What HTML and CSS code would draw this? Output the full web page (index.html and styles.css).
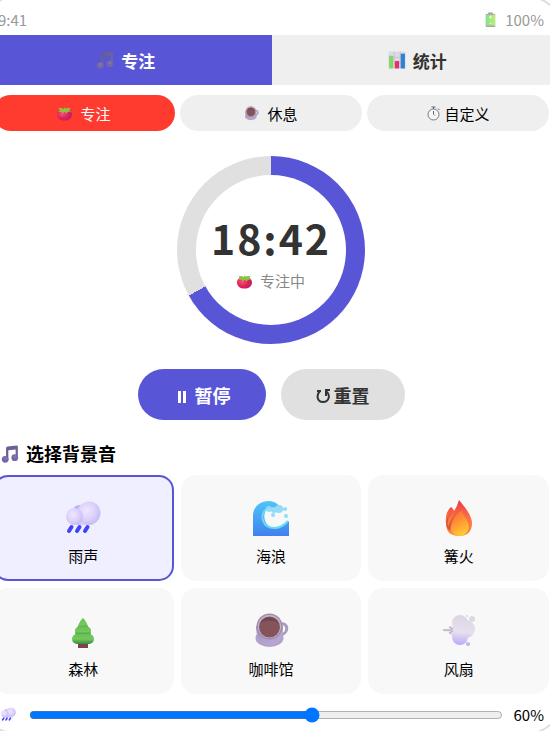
FILE: index.html
```html
<!DOCTYPE html>
<html lang="zh-CN">
<head>
	<meta charset="utf-8">
	<meta name="viewport" content="width=device-width, initial-scale=1.0">
	<title>专注</title>
	<link rel="stylesheet" href="styles.css">
</head>
<body>
	<!-- icons used more than once -->
	<svg class="defs" width="0" height="0" aria-hidden="true">
		<defs>
			<linearGradient id="noteFill" x1="0" y1="0" x2="1" y2="1">
				<stop offset="0" stop-color="#665a90"/>
				<stop offset="1" stop-color="#7668a8"/>
			</linearGradient>
			<radialGradient id="tomatoFill" cx="0.35" cy="0.4" r="0.7">
				<stop offset="0" stop-color="#ff4b83"/>
				<stop offset="0.6" stop-color="#dd2055"/>
				<stop offset="1" stop-color="#b52268"/>
			</radialGradient>
			<radialGradient id="cloudFill" cx="0.4" cy="0.4" r="0.65">
				<stop offset="0" stop-color="#eee8ff"/>
				<stop offset="0.6" stop-color="#dcd0fa"/>
				<stop offset="1" stop-color="#c5b8f4"/>
			</radialGradient>
			<linearGradient id="cupFill" x1="0" y1="0" x2="1" y2="1">
				<stop offset="0" stop-color="#a792bd"/>
				<stop offset="1" stop-color="#b9acd8"/>
			</linearGradient>
			<linearGradient id="waveFill" x1="0" y1="0" x2="0" y2="1">
				<stop offset="0" stop-color="#4ec4fa"/>
				<stop offset="1" stop-color="#4280ee"/>
			</linearGradient>
			<linearGradient id="fireOuter" x1="0" y1="0" x2="0" y2="1">
				<stop offset="0" stop-color="#ec3845"/>
				<stop offset="0.5" stop-color="#fb7243"/>
				<stop offset="1" stop-color="#fa8b3d"/>
			</linearGradient>
			<linearGradient id="fireInner" x1="0.3" y1="0" x2="0.7" y2="1">
				<stop offset="0" stop-color="#fb6a3b"/>
				<stop offset="0.5" stop-color="#ff9a35"/>
				<stop offset="1" stop-color="#ffd22f"/>
			</linearGradient>
			<linearGradient id="treeFill" x1="0" y1="0" x2="0" y2="1">
				<stop offset="0" stop-color="#5fc45b"/>
				<stop offset="0.5" stop-color="#78c759"/>
				<stop offset="1" stop-color="#3c8748"/>
			</linearGradient>
			<linearGradient id="windFill" gradientUnits="userSpaceOnUse" x1="20" y1="2" x2="17" y2="33">
				<stop offset="0" stop-color="#dcd6e0"/>
				<stop offset="0.55" stop-color="#e6dff0"/>
				<stop offset="1" stop-color="#b7a3f6"/>
			</linearGradient>
			<linearGradient id="batteryFill">
				<stop offset="0" stop-color="#81e489"/>
				<stop offset="1" stop-color="#c3ec72"/>
			</linearGradient>
		</defs>
		<symbol id="note" viewBox="0 0 32 32">
			<path fill="url(#noteFill)" d="M9 6Q9 3 12 2.600L28 1Q30 1 30 3V23H26V8L13 9.500V26H9Z"/>
			<circle cx="7.500" cy="25.500" r="6" fill="#7567a6"/>
			<circle cx="24.500" cy="22.500" r="6" fill="#7567a6"/>
			<circle cx="8" cy="24" r="2.500" fill="#8377b5"/>
			<circle cx="25" cy="21" r="2.500" fill="#8377b5"/>
		</symbol>
		<symbol id="tomato" viewBox="0 0 32 32">
			<path fill="url(#tomatoFill)" d="M16 8C24 4 32 10 32 18C32 26 25 31 16 31S0 26 0 18C0 10 8 4 16 8Z"/>
			<path fill="#8ac43f" d="M15 4L18 3L18 6Q23 3 29 5L26 9L30 12L23 12L21 16L16 12L12 16L10 12L3 13L6 9L3 5Q10 3 15 7Z"/>
		</symbol>
		<symbol id="rain" viewBox="0 0 36 34">
			<circle cx="14" cy="10" r="6" fill="#b9b5f2"/>
			<path fill="#d6cbf9" d="M9 13H28V24H9Z"/>
			<circle cx="24" cy="12" r="11.500" fill="url(#cloudFill)"/>
			<circle cx="9.500" cy="15.500" r="8.500" fill="url(#cloudFill)"/>
			<path stroke="#3d46fc" stroke-width="4" stroke-linecap="round" d="M6.500 26L4 30M14.500 26L12 30M22.500 26L20 30"/>
		</symbol>
		<symbol id="coffee" viewBox="0 0 36 36">
			<path fill="none" stroke="#aa9cc0" stroke-width="3" d="M27 11C36 9 36 21 27 22"/>
			<ellipse cx="16.500" cy="25" rx="14" ry="9" fill="#b2a1cc"/>
			<path fill="url(#cupFill)" d="M3 13H30Q31 32 17 32T3 13Z"/>
			<circle cx="16.500" cy="13.500" r="13" fill="#9e8da8"/>
			<circle cx="16.500" cy="13.500" r="11.500" fill="#c5b7d3"/>
			<circle cx="16.500" cy="14" r="10.500" fill="#85545a"/>
			<path fill="#6d464e" d="M7 10Q16 -1 26 10Q16 5 7 10Z"/>
		</symbol>
	</svg>

	<div class="phone">
		<div class="status-bar">
			<span>9:41</span>
			<span class="battery">
				<svg class="icon-sm" viewBox="0 0 32 32" aria-hidden="true">
					<path fill="#a99eb2" d="M11 1H21V5H11Z"/>
					<path fill="#aaa3b0" d="M6 4H26V32H6Z"/>
					<path fill="url(#batteryFill)" d="M6 6H26V29H6Z"/>
					<path stroke="#effff0" stroke-width="2" d="M16 8V14M13 11H19M14 24H18"/>
				</svg>
				100%
			</span>
		</div>

		<div class="tabs">
			<button type="button" class="tab active">
				<svg class="icon-md" aria-hidden="true"><use href="#note"/></svg>
				专注
			</button>
			<button type="button" class="tab">
				<svg class="icon-md" viewBox="0 0 34 34" aria-hidden="true">
					<path fill="#dfd9e5" d="M1 1H33V33H1Z"/>
					<path stroke="#bdb4c7" d="M1 12H33M1 23H33M12 1V33M23 1V33"/>
					<path fill="#84d765" d="M2 9H10V33H2Z"/>
					<path fill="#e6306b" d="M13 19H21V33H13Z"/>
					<path fill="#2c83d4" d="M24 5H32V33H24Z"/>
				</svg>
				统计
			</button>
		</div>

		<div class="content">
			<div class="modes">
				<button type="button" class="mode active">
					<svg class="icon-sm" aria-hidden="true"><use href="#tomato"/></svg>
					专注
				</button>
				<button type="button" class="mode">
					<svg class="icon-sm" aria-hidden="true"><use href="#coffee"/></svg>
					休息
				</button>
				<button type="button" class="mode narrow">
					<svg class="icon-sm" viewBox="0 0 30 30" aria-hidden="true">
						<circle cx="15" cy="17" r="11" fill="#f6f6f6" stroke="#777" stroke-width="2"/>
						<path fill="none" stroke="#666" stroke-width="2" d="M11 2H19M15 2V6M24 5L27 8M15 17V10"/>
						<path stroke="#b8a58a" stroke-width="2" d="M15 17L19 19"/>
					</svg>
					自定义
				</button>
			</div>

			<div class="timer">
				<div class="timer-inner">
					<div class="time">18:42</div>
					<div class="state">
						<svg class="icon-sm" aria-hidden="true"><use href="#tomato"/></svg>
						专注中
					</div>
				</div>
			</div>

			<div class="controls">
				<button type="button" class="control primary">
					<svg class="icon-md" viewBox="0 0 18 18" aria-hidden="true">
						<path fill="#fff" d="M5 5H8V17H5ZM10 5H13V17H10Z"/>
					</svg>
					暂停
				</button>
				<button type="button" class="control reset">
					<svg class="icon-reset" viewBox="0 0 15 18" aria-hidden="true">
						<path fill="none" stroke="#333" stroke-width="2" d="M4 5C0 9 1 16 7 16C13 16 15 9 10 5"/>
						<path fill="none" stroke="#333" stroke-width="2" d="M14 4H10V10M1 5H5"/>
					</svg>
					重置
				</button>
			</div>

			<h2 class="title">
				<svg class="icon-md" aria-hidden="true"><use href="#note"/></svg>
				选择背景音
			</h2>

			<div class="sounds">
				<button type="button" class="sound active">
					<svg class="icon-lg" aria-hidden="true"><use href="#rain"/></svg>
					雨声
				</button>
				<button type="button" class="sound">
					<svg class="icon-lg" viewBox="0 0 36 36" aria-hidden="true">
						<path fill="url(#waveFill)" d="M0 36V16C0 6 8 1 16 1Q23 1 28 8L20 14C12 20 15 29 22 28Q29 28 36 21V36Z"/>
						<path fill="#f8f8f8" d="M13 10Q20 5 29 12L35 21Q28 29 21 28C12 27 9 17 13 10Z"/>
						<path fill="none" stroke="#68d9f8" stroke-width="2" d="M13 9C6 16 10 28 21 28Q29 28 35 21"/>
						<g fill="#92dcf8">
							<circle cx="16" cy="9" r="3"/>
							<circle cx="21" cy="10" r="3"/>
							<circle cx="26" cy="9" r="4"/>
							<circle cx="32" cy="9" r="2"/>
							<circle cx="20" cy="15" r="2"/>
							<circle cx="33" cy="16" r="2"/>
						</g>
					</svg>
					海浪
				</button>
				<button type="button" class="sound">
					<svg class="icon-lg" viewBox="0 0 36 36" aria-hidden="true">
						<path fill="url(#fireOuter)" d="M18 0C22 5 31 15 31 23C31 32 26 36 18 36C9 36 5 31 5 24C4 17 6 10 10 7Q12 8 13 11Q16 7 18 0Z"/>
						<path fill="#d85338" d="M11 12Q5 19 7 27Q10 19 17 11Q10 20 9 31Q5 27 5 22Q6 16 11 12Z"/>
						<path fill="url(#fireInner)" d="M21 10C15 14 10 22 10 28C10 34 15 36 19 36C26 35 29 29 27 23C26 18 22 17 21 10Z"/>
					</svg>
					篝火
				</button>
				<button type="button" class="sound">
					<svg class="icon-lg" viewBox="0 0 36 36" aria-hidden="true">
						<path fill="#78454b" d="M13 27H23V35H13Z"/>
						<path fill="url(#treeFill)" d="M18 5C15 7 13 13 12 15C12 17 14 18 18 18S24 17 24 15C23 13 20 6 18 5Z"/>
						<rect x="10" y="14" width="16" height="9" rx="4" fill="url(#treeFill)"/>
						<rect x="7" y="21" width="22" height="10" rx="5" fill="url(#treeFill)"/>
					</svg>
					森林
				</button>
				<button type="button" class="sound">
					<svg class="icon-lg" aria-hidden="true"><use href="#coffee"/></svg>
					咖啡馆
				</button>
				<button type="button" class="sound">
					<svg class="icon-lg" viewBox="0 0 36 36" aria-hidden="true">
						<g fill="url(#windFill)">
							<circle cx="19" cy="10" r="8"/>
							<circle cx="25" cy="16" r="9"/>
							<circle cx="19" cy="24" r="8"/>
							<path d="M2 16L9 16L8 13L15 14V24L8 21L9 19L2 18Z"/>
							<circle cx="31" cy="6" r="3"/>
							<circle cx="26" cy="3" r="1"/>
							<circle cx="27" cy="31" r="2"/>
						</g>
						<path fill="none" stroke="#aaa0b2" d="M2 17H11M8 14L12 16M8 20L12 18"/>
					</svg>
					风扇
				</button>
			</div>

			<div class="volume">
				<label for="volume" aria-label="音量">
					<svg class="icon-sm" aria-hidden="true"><use href="#rain"/></svg>
				</label>
				<input type="range" id="volume" min="0" max="100" value="60">
				<output for="volume">60%</output>
			</div>
		</div>
	</div>
</body>
</html>
```
FILE: styles.css
```css
* {
	box-sizing: border-box;
}

body {
	margin: 0;
	overflow: hidden;
	background: #fff;
	color: #000;
	font-family: "Noto Sans CJK SC", sans-serif;
	font-size: 15px;
}

button {
	border: none;
	font-family: inherit;
	color: #000;
	cursor: pointer;
}

.defs {
	display: block;
}

/* the frame is a bit larger than the window, only its corners show */
.phone {
	margin: -5px -15px 0 -22px;
	border: 2px solid #ddd;
	border-radius: 40px;
}

.content {
	padding: 10px 14px 8px 13px;
}

/* icons */
.icon-sm {
	width: 15px;
	height: 15px;
}

.icon-md {
	width: 18px;
	height: 18px;
}

.icon-lg {
	width: 36px;
	height: 36px;
}

.icon-reset {
	width: 15px;
	height: 18px;
}

.icon-sm,
.icon-md,
.icon-lg,
.icon-reset {
	flex: none;
}

.status-bar {
	display: flex;
	justify-content: space-between;
	align-items: center;
	height: 38px;
	padding: 7px 19px 0 18px;
	color: #999;
}

.battery {
	display: flex;
	align-items: center;
	gap: 7px;
}

/* tabs */
.tabs {
	display: flex;
}

.tab {
	flex: 1;
	display: flex;
	justify-content: center;
	align-items: center;
	gap: 7px;
	height: 50px;
	background: #efefef;
	color: #333;
	font-size: 17px;
	font-weight: bold;
}

.tab.active {
	background: #5856d6;
	color: #fff;
}

.modes {
	display: flex;
	gap: 5px;
}

.mode {
	flex: 1;
	display: flex;
	justify-content: center;
	align-items: center;
	gap: 8px;
	height: 36px;
	border-radius: 18px;
	background: #efefef;
	font-size: 15px;
}

.mode.narrow {
	gap: 3px;
}

.mode.active {
	background: #ff3b30;
	color: #fff;
}

/* timer ring */
.timer {
	display: flex;
	justify-content: center;
	align-items: center;
	width: 188px;
	height: 188px;
	margin: 25px auto;
	border-radius: 50%;
	background: conic-gradient(#5856d6 0deg 241deg, #e0e0e0 241deg);
}

.timer-inner {
	display: flex;
	flex-direction: column;
	align-items: center;
	justify-content: center;
	width: 150px;
	height: 150px;
	border-radius: 50%;
	background: #fff;
}

.time {
	color: #333;
	font-size: 41px;
	font-weight: bold;
	line-height: 62px;
	letter-spacing: 2px;
}

.state {
	display: flex;
	align-items: center;
	gap: 8px;
	color: #888;
	line-height: 26px;
}

.controls {
	display: flex;
	justify-content: center;
	gap: 15px;
}

.control {
	display: flex;
	align-items: center;
	height: 51px;
	border-radius: 26px;
	font-size: 18px;
	font-weight: bold;
}

.primary {
	gap: 4px;
	padding: 0 35px;
	background: #5856d6;
	color: #fff;
}

.reset {
	gap: 3px;
	padding: 0 35px;
	background: #e0e0e0;
	color: #333;
}

/* background sounds */
.title {
	display: flex;
	align-items: center;
	gap: 7px;
	margin: 20px 0 8px 8px;
	font-size: 18px;
	line-height: 27px;
}

.sounds {
	display: grid;
	grid-template-columns: repeat(3, 1fr);
	gap: 7px;
}

.sound {
	display: flex;
	flex-direction: column;
	align-items: center;
	justify-content: center;
	gap: 9px;
	height: 106px;
	padding: 11px 0 0 0;
	border: 2px solid transparent;
	border-radius: 15px;
	background: #f8f8f8;
	font-size: 15px;
	line-height: 22px;
}

.sound.active {
	border-color: #5856d6;
	background: #f0efff;
}

.volume {
	display: flex;
	align-items: center;
	padding: 10px 5px 0 8px;
}

.volume label {
	display: flex;
}

.volume input {
	flex: 1;
	margin: 0 11px 0 13px;
}
```
